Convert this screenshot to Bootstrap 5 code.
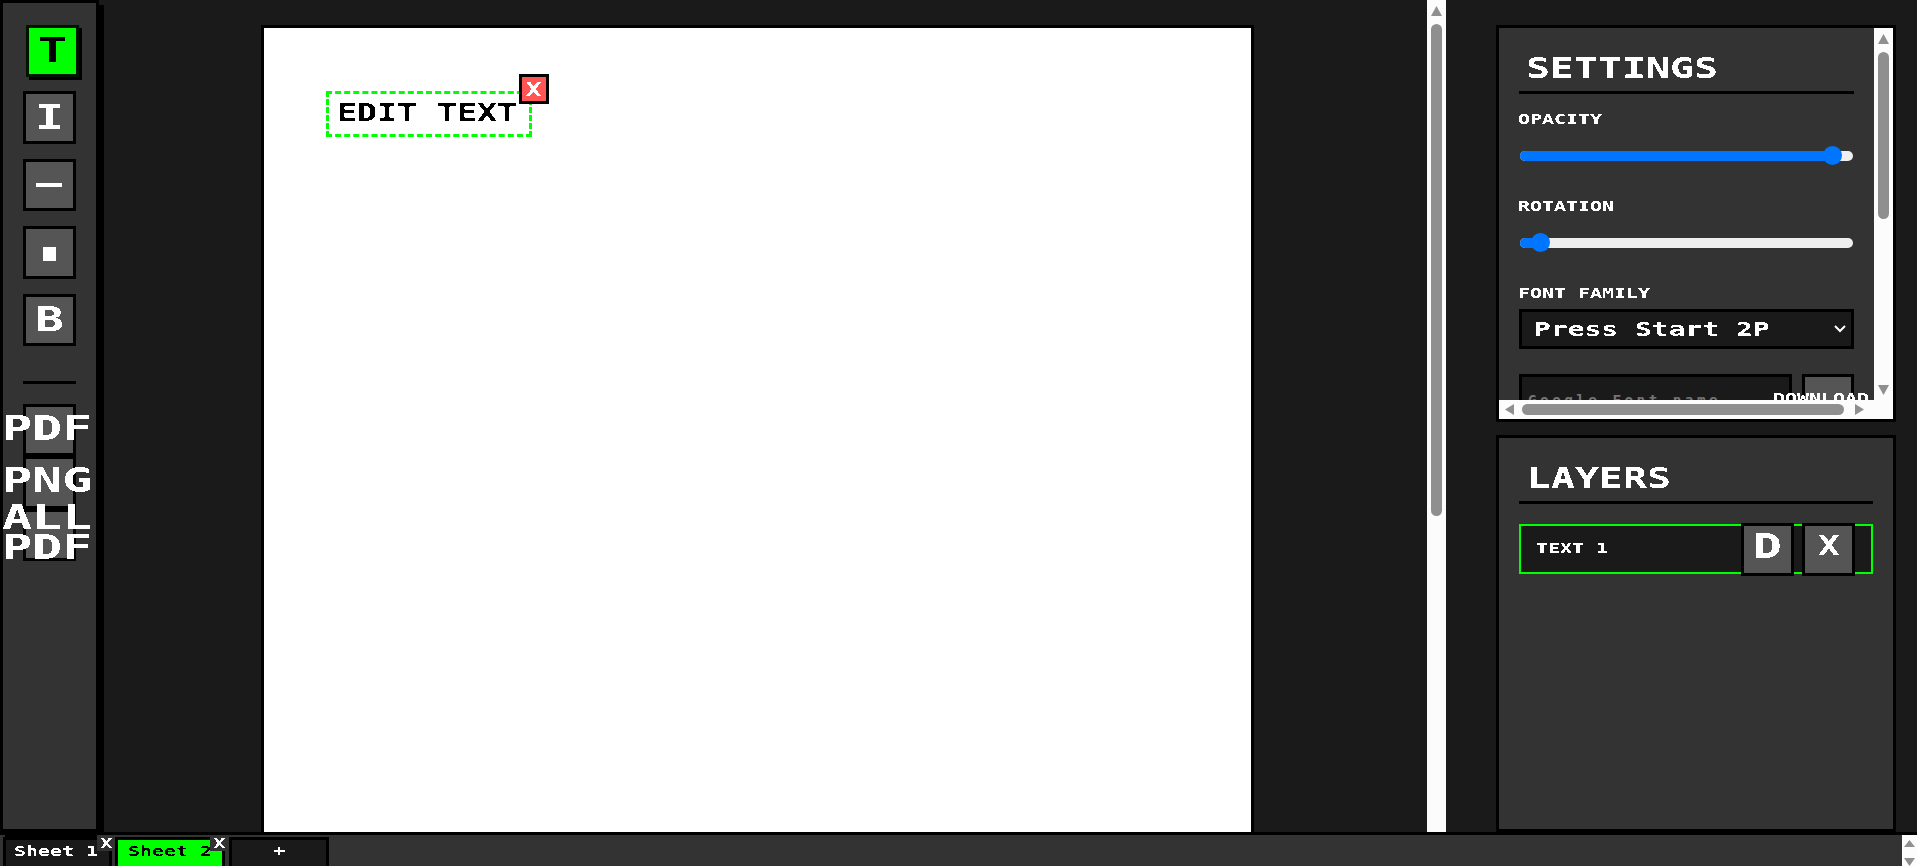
<!DOCTYPE html>
<html lang="en">
<head>
<meta charset="UTF-8">
<meta name="viewport" content="width=device-width, initial-scale=1.0">
<title>Sheet Editor</title>
<link href="https://cdn.jsdelivr.net/npm/bootstrap@5.3.0/dist/css/bootstrap.min.css" rel="stylesheet">
<style>
    :root {
        --ink: #000;
        --panel: #333;
        --deep: #1a1a1a;
        --key: #555;
        --neon: #0f0;
    }
    html, body { height: 100%; overflow: hidden; }
    body {
        background: var(--deep);
        color: #fff;
        font-family: "DejaVu Sans Mono", "Liberation Mono", monospace;
        font-weight: 700;
    }
    button, input { font-weight: 700; }
    /* the pixel font is 1em per glyph: a mono face at 1.2x stretched sideways takes the same room */
    .px12 { font-size: 14.4px; line-height: 12px; }
    .px16 { font-size: 20.2px; line-height: 17px; }
    .px20 { font-size: 24px; line-height: 20px; }
    .px24 { font-size: 28.8px; line-height: 24px; }
    .px29 { font-size: 34.5px; line-height: 30px; }
    .wide {
        display: inline-block;
        transform: scaleX(1.385);
        transform-origin: left center;
        white-space: pre;
        filter: url(#crisp);
    }
    .wide.mid { transform-origin: center; }
    .wide.keep { transform: none; }

    .app-top { height: 832px; }

    .tool-rail {
        width: 99px;
        height: 832px;
        margin-right: 5px;
        padding-top: 21px;
        background: var(--panel);
        border: 3px solid var(--ink);
        box-shadow: 5px 5px 0 var(--ink);
        flex: none;
    }
    .tool-key {
        width: 53px;
        height: 52.4px;
        margin-bottom: 15px;
        padding: 0 0 2px;
        background: var(--key);
        border: 3px solid var(--ink);
        color: #fff;
        white-space: nowrap;
        flex: none;
    }
    .tool-key.picked {
        background: var(--neon);
        color: #000;
        border-color: #001500;
        box-shadow: 3px 3px 0 var(--ink);
        transform: translate(3px, 1px);
    }
    .tool-key.flat { margin-bottom: 0; padding-bottom: 5px; }
    .tool-key.flat .wide { transform: translateX(-2px) scaleX(1.45); }
    .tool-rule {
        width: 53px;
        height: 3px;
        margin: 20px 0;
        background: var(--ink);
        flex: none;
    }

    .sheet-view { width: 1323px; padding: 25px 0 0 157px; overflow: hidden; flex: none; }
    .sheet-page {
        width: 993px;
        height: 830px;
        padding: 63px 0 0 62px;
        background: #fff;
        border: 3px solid var(--ink);
        color: #000;
    }
    .text-item {
        width: 206px;
        height: 46px;
        padding: 9px 0 0 8px;
        border: 3px dashed var(--neon);
    }
    .text-item-x {
        position: absolute;
        top: -20px;
        right: -20px;
        width: 30px;
        height: 30px;
        background: #f55;
        border: 3px solid var(--ink);
        font-size: 19px;
        line-height: 20px;
    }

    .fake-bar { background: #fcfcfc; flex: none; }
    .fake-thumb { background: #8f8f8f; border-radius: 6px; }
    .bar-main { width: 19px; height: 832px; padding: 6px 4px 0; }
    .bar-set { width: 19px; padding: 6px 4px 5px; }
    .arrow-img { display: block; fill: #8f8f8f; flex: none; }

    .side-col { width: 471px; padding: 25px 21px 0 50px; flex: none; }
    .side-box { width: 400px; border: 3px solid var(--ink); background: var(--panel); }
    .side-box.top-box { height: 397px; margin-bottom: 13px; }
    .side-box.low-box { height: 397px; padding: 27px 20px 0; }
    .set-body { height: 372px; padding: 27px 0 0 20px; overflow: hidden; position: relative; }
    .box-title { padding: 1px 0 11px 8px; border-bottom: 3px solid var(--ink); }
    .set-title { width: 335px; padding-left: 7px; }
    .field-name { display: block; margin: 0 0 0 -1px; }
    .name-first { margin-top: 19px; }
    .name-next { margin-top: 39px; }
    .track {
        width: 333px;
        height: 10px;
        margin: 26px 0 0 1px;
        border-radius: 5px;
        background: #efefef;
        position: relative;
    }
    .track-fill { height: 10px; border-radius: 5px; background: #0075ff; }
    .track-knob {
        position: absolute;
        top: -5px;
        width: 19px;
        height: 19px;
        margin-left: -9.5px;
        border-radius: 50%;
        background: #0075ff;
    }
    .font-pick {
        width: 335px;
        height: 40px;
        margin-top: 10px;
        padding: 0 5px 0 12px;
        background: var(--deep);
        border: 3px solid var(--ink);
        color: #fff;
    }
    .add-row { width: 335px; margin-top: 25px; position: relative; }
    .font-name {
        width: 273px;
        height: 44px;
        padding: 15px 0 7px 6px;
        background: var(--deep);
        border: 3px solid var(--ink);
        color: #fff;
        letter-spacing: 3.4px;
        overflow: hidden;
        white-space: nowrap;
    }
    .font-name::placeholder { color: #757575; opacity: 1; }
    .font-add {
        width: 52px;
        height: 44px;
        padding: 0;
        background: var(--key);
        border: 3px solid var(--ink);
        flex: none;
    }
    .font-add-text {
        position: absolute;
        left: 254px;
        top: 18px;
        color: #fff;
    }
    .bar-low {
        height: 19px;
        padding: 4px 5px 4px 6px;
    }
    .layer-row {
        width: 354px;
        height: 50px;
        margin-top: 20px;
        padding-left: 15px;
        background: var(--deep);
        border: 2px solid var(--neon);
    }
    .layer-name { margin-top: -2px; }
    .layer-key {
        width: 53px;
        height: 53px;
        padding: 0 0 6px;
        background: var(--key);
        border: 3px solid var(--ink);
        color: #fff;
        flex: none;
    }
    .layer-key.thin { font-size: 26px; }

    .sheet-strip {
        height: 34px;
        background: var(--panel);
        border-top: 3px solid var(--ink);
    }
    .sheet-tab {
        height: 29px;
        margin-top: 2px;
        background: var(--deep);
        border: 3px solid var(--ink);
        border-bottom: 0;
        color: #fff;
        position: relative;
        flex: none;
    }
    .sheet-tab.one { width: 109px; margin-left: 3px; margin-right: 3px; padding: 5px 0 0 8px; }
    .sheet-tab.two { width: 110px; margin-right: 4px; padding: 5px 0 0 10px; background: var(--neon); color: #000; }
    .sheet-tab.plus { width: 100px; padding: 5px 0 0 0; text-align: center; }
    .tab-x {
        position: absolute;
        top: -5px;
        right: -6px;
        width: 18px;
        height: 16px;
        background: var(--panel);
        color: #fff;
        z-index: 2;
    }
    .bar-strip { width: 15px; height: 31px; padding-top: 5px; }
    .filter-defs { position: absolute; width: 0; height: 0; }
</style>
</head>
<body>

<!-- hard edge on the text so it reads like the pixel font -->
<svg class="filter-defs" aria-hidden="true">
    <filter id="crisp" x="-5%" y="-5%" width="110%" height="110%" color-interpolation-filters="sRGB">
        <feComponentTransfer>
            <feFuncA type="discrete" tableValues="0 0 1 1"/>
        </feComponentTransfer>
    </filter>
</svg>

<!-- top area -->
<div class="app-top d-flex">

    <!-- tools -->
    <div class="tool-rail d-flex flex-column align-items-center">
        <button class="tool-key picked px29 d-flex align-items-center justify-content-center"><span class="wide mid">T</span></button>
        <button class="tool-key px29 d-flex align-items-center justify-content-center"><span class="wide mid">I</span></button>
        <button class="tool-key px29 d-flex align-items-center justify-content-center"><span class="wide mid">−</span></button>
        <button class="tool-key px29 d-flex align-items-center justify-content-center"><span class="wide mid keep">▪</span></button>
        <button class="tool-key px29 d-flex align-items-center justify-content-center"><span class="wide mid">B</span></button>
        <div class="tool-rule"></div>
        <button class="tool-key flat px29 d-flex align-items-center justify-content-center"><span class="wide mid">PDF</span></button>
        <button class="tool-key flat px29 d-flex align-items-center justify-content-center"><span class="wide mid">PNG</span></button>
        <button class="tool-key flat px29 d-flex align-items-center justify-content-center"><span class="wide mid">ALL
PDF</span></button>
    </div>

    <!-- page -->
    <div class="sheet-view">
        <div class="sheet-page">
            <div class="text-item px20 position-relative">
                <span class="wide">EDIT TEXT</span>
                <div class="text-item-x text-white d-flex align-items-center justify-content-center"><span class="wide mid">X</span></div>
            </div>
        </div>
    </div>

    <div class="fake-bar bar-main d-flex flex-column">
        <svg class="arrow-img" width="11" height="10" viewBox="0 0 11 10"><path d="M5.5 0 11 10H0z"/></svg>
        <div class="fake-thumb mt-2" style="height: 492px"></div>
    </div>

    <!-- right side -->
    <div class="side-col">
        <div class="side-box top-box d-flex flex-column">
            <div class="d-flex flex-grow-1">
                <div class="set-body flex-grow-1">
                    <div class="box-title set-title px24"><span class="wide">SETTINGS</span></div>
                    <label class="field-name name-first px12"><span class="wide">OPACITY</span></label>
                    <div class="track"><div class="track-fill" style="width: 93.7%"></div><div class="track-knob" style="left: 93.7%"></div></div>
                    <label class="field-name name-next px12"><span class="wide">ROTATION</span></label>
                    <div class="track"><div class="track-fill" style="width: 6.3%"></div><div class="track-knob" style="left: 6.3%"></div></div>
                    <label class="field-name name-next px12"><span class="wide">FONT FAMILY</span></label>
                    <button class="font-pick px16 d-flex align-items-center justify-content-between">
                        <span class="wide">Press Start 2P</span>
                        <svg width="12" height="8" viewBox="0 0 12 8"><path d="M1 1 6 6 11 1" fill="none" stroke="#fff" stroke-width="2"/></svg>
                    </button>
                    <div class="add-row d-flex justify-content-between">
                        <input class="font-name px12" placeholder="Google Font name">
                        <button class="font-add"></button>
                        <span class="font-add-text px12"><span class="wide">DOWNLOAD</span></span>
                    </div>
                </div>
                <div class="fake-bar bar-set d-flex flex-column">
                    <svg class="arrow-img" width="11" height="10" viewBox="0 0 11 10"><path d="M5.5 0 11 10H0z"/></svg>
                    <div class="fake-thumb mt-2" style="height: 167px"></div>
                    <svg class="arrow-img mt-auto" width="11" height="10" viewBox="0 0 11 10"><path d="M0 0H11L5.5 10z"/></svg>
                </div>
            </div>
            <div class="fake-bar bar-low d-flex align-items-center">
                <svg class="arrow-img" width="9" height="11" viewBox="0 0 9 11"><path d="M9 0V11L0 5.5z"/></svg>
                <div class="fake-thumb ms-2" style="width: 322px; height: 11px"></div>
                <svg class="arrow-img ms-auto me-4" width="9" height="11" viewBox="0 0 9 11"><path d="M0 0 9 5.5 0 11z"/></svg>
            </div>
        </div>

        <div class="side-box low-box">
            <div class="box-title px24"><span class="wide">LAYERS</span></div>
            <div class="layer-row d-flex align-items-center">
                <span class="layer-name px12 flex-grow-1"><span class="wide">TEXT 1</span></span>
                <button class="layer-key px29 d-flex align-items-center justify-content-center"><span class="wide mid">D</span></button>
                <button class="layer-key thin ms-2 me-3 d-flex align-items-center justify-content-center"><span class="wide mid">X</span></button>
            </div>
        </div>
    </div>
</div>

<!-- sheets -->
<div class="sheet-strip d-flex">
    <div class="sheet-tab one px12"><span class="wide">Sheet 1</span><div class="tab-x px12 d-flex align-items-center justify-content-center"><span class="wide mid">X</span></div></div>
    <div class="sheet-tab two px12"><span class="wide">Sheet 2</span><div class="tab-x px12 d-flex align-items-center justify-content-center"><span class="wide mid">X</span></div></div>
    <div class="sheet-tab plus px12"><span class="wide mid">+</span></div>
    <div class="fake-bar bar-strip ms-auto d-flex flex-column align-items-center justify-content-between">
        <svg class="arrow-img" width="11" height="7" viewBox="0 0 11 7"><path d="M5.5 0 11 7H0z"/></svg>
        <svg class="arrow-img" width="11" height="8" viewBox="0 0 11 8"><path d="M0 0H11L5.5 8z"/></svg>
    </div>
</div>

<script src="https://cdn.jsdelivr.net/npm/bootstrap@5.3.0/dist/js/bootstrap.bundle.min.js"></script>
</body>
</html>
